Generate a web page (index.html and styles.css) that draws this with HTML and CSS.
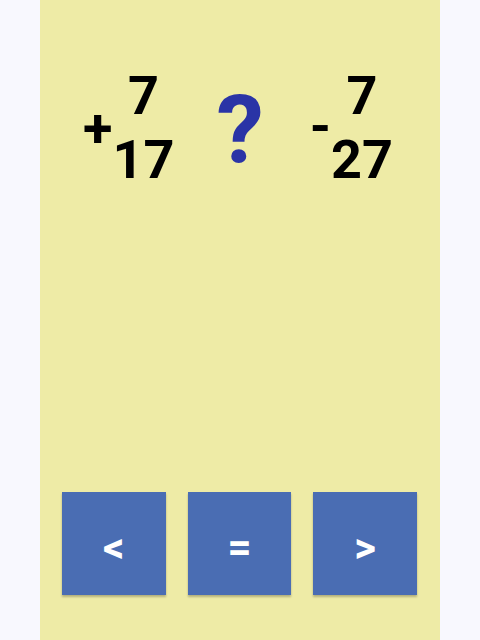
FILE: index.html
```html
<!DOCTYPE html>
<html>
<head>
<meta charset="utf-8">
<link rel="stylesheet" href="styles.css">
</head>
<body>
<div class="panel">
  <div class="equation">
    <div class="term">
      <span class="op">+</span>
      <div class="stack">
        <span class="num">7</span>
        <span class="num">17</span>
      </div>
    </div>
    <span class="question">?</span>
    <div class="term term-right">
      <span class="op op-minus">-</span>
      <div class="stack">
        <span class="num">7</span>
        <span class="num">27</span>
      </div>
    </div>
  </div>
  <div class="spacer"></div>
  <div class="buttons">
    <button class="btn">&lt;</button>
    <button class="btn">=</button>
    <button class="btn">&gt;</button>
  </div>
</div>
</body>
</html>
```

FILE: styles.css
```css
html, body {
  margin: 0;
  padding: 0;
  height: 100%;
}
body {
  background: #f8f8fe;
  font-family: Roboto, "Liberation Sans", sans-serif;
}
.panel {
  width: 400px;
  height: 640px;
  margin: 0 auto;
  background: #eeeba6;
  display: flex;
  flex-direction: column;
}
.equation {
  display: flex;
  justify-content: center;
  align-items: center;
  padding: 64px 4px 0 0;
}
.term {
  display: flex;
  align-items: center;
}
.term-right {
  margin-left: 46px;
}
.stack {
  display: flex;
  flex-direction: column;
  align-items: center;
}
.num {
  font-weight: 700;
  font-size: 54px;
  line-height: 64px;
  color: #000;
}
.op {
  font-weight: 700;
  font-size: 54px;
  line-height: 54px;
  color: #000;
  margin-top: 2px;
}
.op-minus {
  margin-top: -4px;
}
.question {
  font-weight: 700;
  font-size: 95px;
  line-height: 95px;
  color: #2a34a6;
  margin: 2px 0 0 42px;
}
.spacer {
  flex: 1;
}
.buttons {
  display: grid;
  grid-template-columns: repeat(3, 1fr);
  gap: 22px;
  padding: 0 23px 45px 22px;
}
.btn {
  height: 103px;
  border: none;
  background: #4a6db3;
  color: #fff;
  font-family: Roboto, "Liberation Sans", sans-serif;
  font-weight: 700;
  font-size: 42px;
  padding: 8px 0 0;
  box-shadow: 0 2px 2px rgba(0,0,0,0.25);
}
```
